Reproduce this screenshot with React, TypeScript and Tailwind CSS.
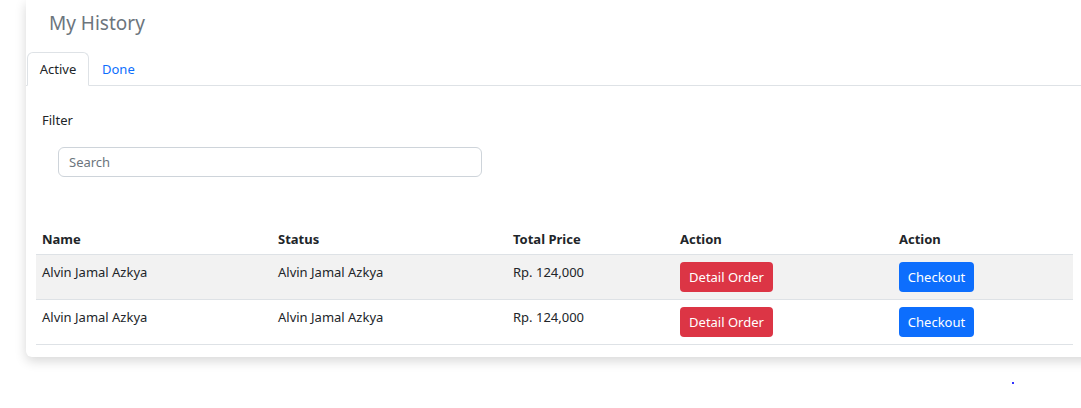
const rows = [
  { name: "Alvin Jamal Azkya", status: "Alvin Jamal Azkya", price: "Rp. 124,000" },
  { name: "Alvin Jamal Azkya", status: "Alvin Jamal Azkya", price: "Rp. 124,000" },
];

const App = () => {
  return (
    <div className="relative w-[1081px] h-[408px] overflow-hidden bg-white font-['Noto_Sans',sans-serif] text-[#212529]">
      <div className="ml-[26px] w-[1080px] bg-white rounded-bl-md shadow-[0_4px_12px_rgba(0,0,0,0.16)] pb-[12px]">
        <div className="h-[46px] pl-[23px] pt-[9px] text-[19px] leading-[28px] text-[#6c757d]">My History</div>

        <div className="mt-[6px] flex border-b border-[#dee2e6] text-[13px]">
          <div className="ml-[1px] -mb-px flex h-[34px] w-[62px] items-center justify-center rounded-t-md border border-[#dee2e6] border-b-white bg-white pt-[2px]">
            Active
          </div>
          <div className="flex h-[33px] items-center px-[13px] pt-[2px] text-[#0d6efd]">Done</div>
        </div>

        <div className="pl-[16px] pt-[24px] text-[13px] leading-[20px]">Filter</div>

        <div className="ml-[32px] mt-[17px]">
          <input
            type="text"
            placeholder="Search"
            className="h-[30px] w-[424px] rounded-md border border-[#ced4da] px-[10px] text-[13px] placeholder:text-[#6c757d] focus:outline-none"
          />
        </div>

        <table className="ml-[10px] mt-[49px] w-[1037px] border-collapse text-[13px] leading-[20px]">
          <colgroup>
            <col className="w-[236px]" />
            <col className="w-[235px]" />
            <col className="w-[167px]" />
            <col className="w-[219px]" />
            <col className="w-[180px]" />
          </colgroup>
          <thead>
            <tr className="border-b border-[#dee2e6] text-left">
              <th className="px-[6px] pb-[5px] pt-[3px] font-bold">Name</th>
              <th className="px-[6px] pb-[5px] pt-[3px] font-bold">Status</th>
              <th className="px-[6px] pb-[5px] pt-[3px] font-bold">Total Price</th>
              <th className="px-[6px] pb-[5px] pt-[3px] font-bold">Action</th>
              <th className="px-[6px] pb-[5px] pt-[3px] font-bold">Action</th>
            </tr>
          </thead>
          <tbody>
            {rows.map((r, i) => (
              <tr key={i} className={`border-b border-[#dee2e6] ${i === 0 ? "bg-[#f2f2f2]" : "bg-white"}`}>
                <td className="px-[6px] pt-[7px] pb-[7px] align-top">{r.name}</td>
                <td className="px-[6px] pt-[7px] pb-[7px] align-top">{r.status}</td>
                <td className="px-[6px] pt-[7px] pb-[7px] align-top">{r.price}</td>
                <td className="px-[6px] pt-[7px] pb-[7px] align-top">
                  <button className="h-[30px] w-[93px] rounded-[4px] bg-[#dc3545] text-[13px] text-white">Detail Order</button>
                </td>
                <td className="px-[6px] pt-[7px] pb-[7px] align-top">
                  <button className="h-[30px] w-[75px] rounded-[4px] bg-[#0d6efd] text-[13px] text-white">Checkout</button>
                </td>
              </tr>
            ))}
          </tbody>
        </table>
      </div>
      <div className="absolute left-[1012px] top-[382px] h-[2px] w-[2px] bg-[#3333ff]" />
    </div>
  );
};

export default App;
